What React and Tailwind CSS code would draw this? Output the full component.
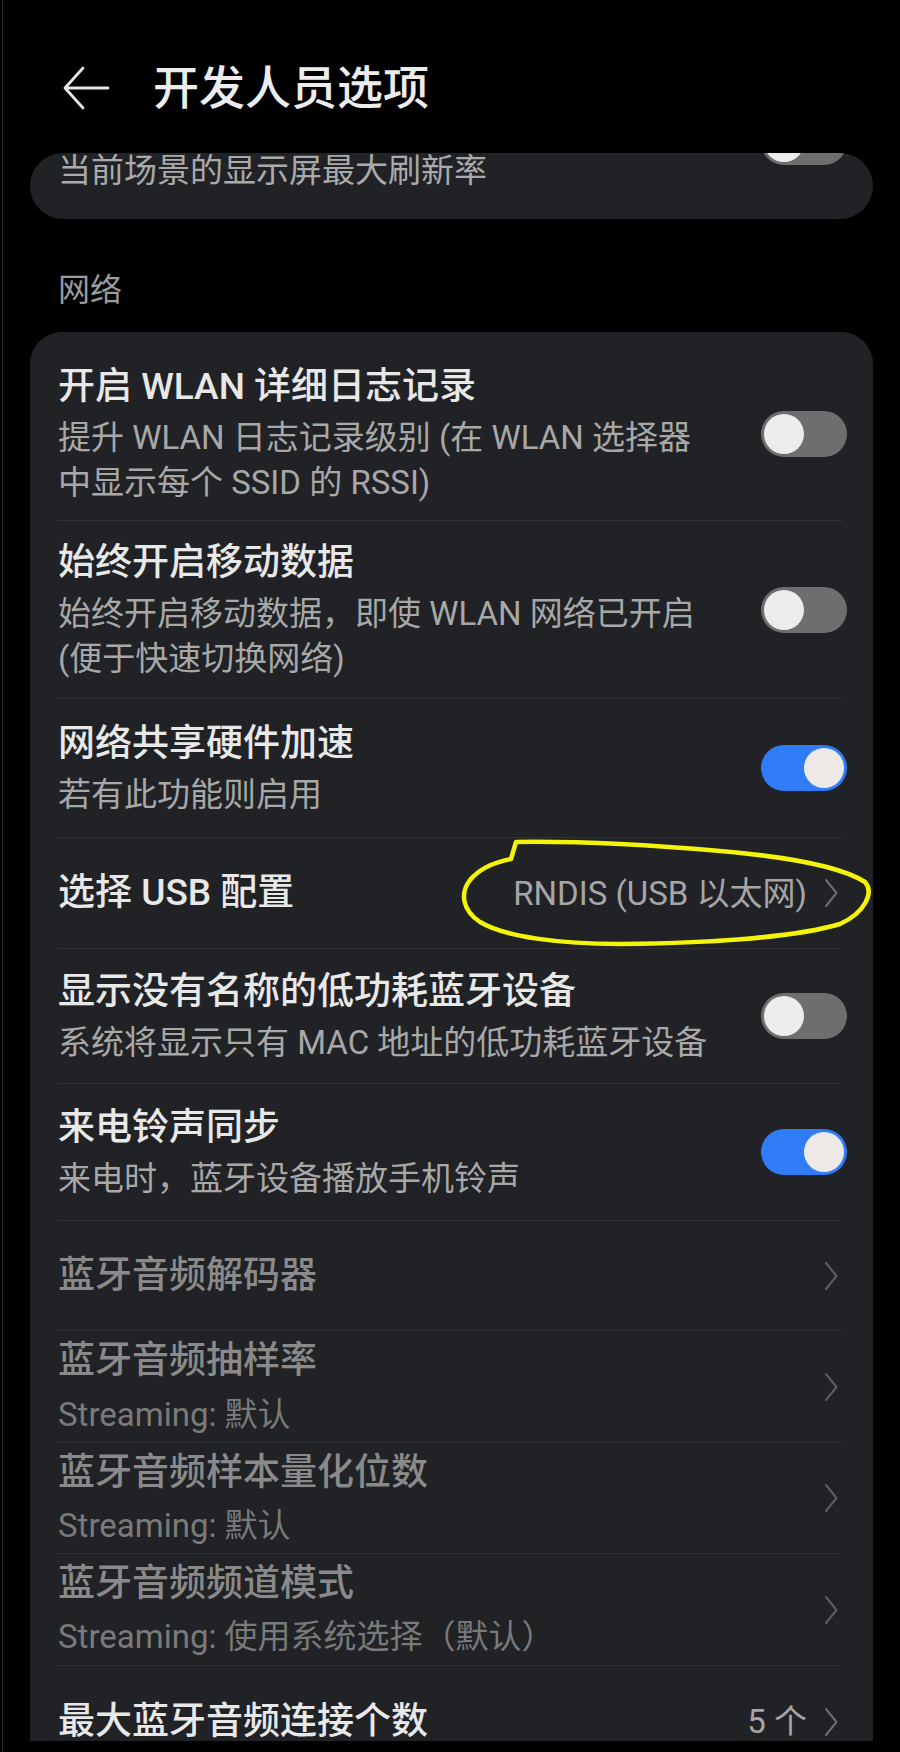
import React from "react";

function Toggle({ on }) {
  if (on) {
    return (
      <div className="w-[86px] h-[46px] rounded-full bg-[#2f7cf6] p-[3px] flex justify-end shrink-0">
        <div className="w-[40px] h-[40px] rounded-full bg-[#ece9e6]" />
      </div>
    );
  }
  return (
    <div className="w-[86px] h-[46px] rounded-full bg-[#6e6e6e] p-[3px] flex justify-start shrink-0">
      <div className="w-[40px] h-[40px] rounded-full bg-[#ececec]" />
    </div>
  );
}

function Chevron({ color }) {
  return (
    <svg width="16" height="30" viewBox="0 0 16 30" fill="none" className="shrink-0">
      <path d="M3 2 L13.5 15 L3 28" stroke={color} strokeWidth="2" strokeLinecap="round" strokeLinejoin="round" />
    </svg>
  );
}

function Divider() {
  return <div className="ml-[28px] mr-[30px] h-px bg-[#303236]" />;
}

function Row({ hClass, title, subs = [], titleClass = "text-[#e8e8e8]", subClass = "text-[#a8a8a8]", subGap = "mt-[4px]", right, children }) {
  return (
    <div className={`relative flex items-center pl-[28px] pr-[26px] ${hClass}`}>
      <div className="flex-1 min-w-0 whitespace-nowrap">
        <div className={`text-[37px] leading-[48px] font-medium ${titleClass}`}>{title}</div>
        {subs.length > 0 && (
          <div className={subGap}>
            {subs.map((s, i) => (
              <div key={i} className={`text-[33px] leading-[45px] ${subClass}`}>{s}</div>
            ))}
          </div>
        )}
      </div>
      {right}
      {children}
    </div>
  );
}

export default function App() {
  return (
    <div className="w-[900px] h-[1752px] bg-black overflow-hidden font-['Roboto','Noto_Sans_CJK_SC',sans-serif]">
      <div className="ml-[2px] h-full border-l border-[#2a2a2a]">
        {/* Header */}
        <div className="h-[153px] pt-[60px]">
          <div className="flex items-center h-[56px]">
            <svg width="48" height="44" viewBox="0 0 48 44" fill="none" className="ml-[59px] shrink-0">
              <path d="M21 2 L3 22 L21 42 M3 22 L46 22" stroke="#e6e6e6" strokeWidth="2.8" strokeLinecap="round" strokeLinejoin="round" />
            </svg>
            <div className="ml-[43px] text-[46px] leading-[56px] font-medium text-[#ececec] whitespace-nowrap">开发人员选项</div>
          </div>
        </div>

        {/* Partially scrolled card */}
        <div className="ml-[27px] w-[843px] h-[66px] rounded-[33px] bg-[#202225] overflow-hidden flex justify-between pl-[28px] pr-[26px]">
          <div className="text-[33px] leading-[36px] text-[#aaaaaa] whitespace-nowrap">当前场景的显示屏最大刷新率</div>
          <div className="-mt-[34px]">
            <Toggle on={false} />
          </div>
        </div>

        {/* Section label */}
        <div className="mt-[49px] pl-[55px] text-[32px] leading-[45px] text-[#9b9b9b]">网络</div>

        {/* Main card */}
        <div className="mt-[19px] ml-[27px] w-[843px] h-[1409px] rounded-t-[32px] bg-[#202225] overflow-hidden pt-[16px]">
          <Row
            hClass="h-[172px]"
            title="开启 WLAN 详细日志记录"
            subs={["提升 WLAN 日志记录级别 (在 WLAN 选择器", "中显示每个 SSID 的 RSSI)"]}
            right={<Toggle on={false} />}
          />
          <Divider />
          <Row
            hClass="h-[177px]"
            title="始终开启移动数据"
            subs={["始终开启移动数据，即使 WLAN 网络已开启", "(便于快速切换网络)"]}
            right={<Toggle on={false} />}
          />
          <Divider />
          <Row
            hClass="h-[138px]"
            title="网络共享硬件加速"
            subs={["若有此功能则启用"]}
            right={<Toggle on={true} />}
          />
          <Divider />
          <Row
            hClass="h-[110px]"
            title="选择 USB 配置"
            right={
              <div className="flex items-center gap-[16px] mr-[8px]">
                <div className="text-[33px] leading-[45px] text-[#a6a6a6] whitespace-nowrap">RNDIS (USB 以太网)</div>
                <Chevron color="#6e6e6e" />
              </div>
            }
          >
            <svg className="absolute left-0 top-0 overflow-visible pointer-events-none" width="843" height="110" viewBox="30 838 843 110" fill="none">
              <path
                d="M511 859 L516 842 C580 841 650 845 720 851 C790 857 840 866 865 882 C874 892 866 912 840 924 C800 936 720 943 620 944 C560 944 505 937 480 922 C462 910 460 893 470 880 C480 868 495 862 511 859"
                stroke="#f4f40a"
                strokeWidth="4.5"
                strokeLinecap="round"
                strokeLinejoin="round"
              />
            </svg>
          </Row>
          <Divider />
          <Row
            hClass="h-[134px]"
            title="显示没有名称的低功耗蓝牙设备"
            subs={["系统将显示只有 MAC 地址的低功耗蓝牙设备"]}
            right={<Toggle on={false} />}
          />
          <Divider />
          <Row
            hClass="h-[136px]"
            title="来电铃声同步"
            subs={["来电时，蓝牙设备播放手机铃声"]}
            right={<Toggle on={true} />}
          />
          <Divider />
          <Row
            hClass="h-[109px]"
            title="蓝牙音频解码器"
            titleClass="text-[#8a8a8a]"
            right={<div className="mr-[8px]"><Chevron color="#5e5e5e" /></div>}
          />
          <Divider />
          <Row
            hClass="h-[111px]"
            title="蓝牙音频抽样率"
            titleClass="text-[#8a8a8a]"
            subs={["Streaming: 默认"]}
            subClass="text-[#7a7a7a]"
            subGap="mt-[7px]"
            right={<div className="mr-[8px]"><Chevron color="#5e5e5e" /></div>}
          />
          <Divider />
          <Row
            hClass="h-[110px]"
            title="蓝牙音频样本量化位数"
            titleClass="text-[#8a8a8a]"
            subs={["Streaming: 默认"]}
            subClass="text-[#7a7a7a]"
            subGap="mt-[6px]"
            right={<div className="mr-[8px]"><Chevron color="#5e5e5e" /></div>}
          />
          <Divider />
          <Row
            hClass="h-[111px]"
            title="蓝牙音频频道模式"
            titleClass="text-[#8a8a8a]"
            subs={["Streaming: 使用系统选择（默认）"]}
            subClass="text-[#7a7a7a]"
            subGap="mt-[6px]"
            right={<div className="mr-[8px]"><Chevron color="#5e5e5e" /></div>}
          />
          <Divider />
          <Row
            hClass="h-[111px]"
            title="最大蓝牙音频连接个数"
            right={
              <div className="flex items-center gap-[16px] mr-[8px]">
                <div className="text-[33px] leading-[45px] text-[#a6a6a6] whitespace-nowrap">5 个</div>
                <Chevron color="#6e6e6e" />
              </div>
            }
          />
        </div>
      </div>
    </div>
  );
}
